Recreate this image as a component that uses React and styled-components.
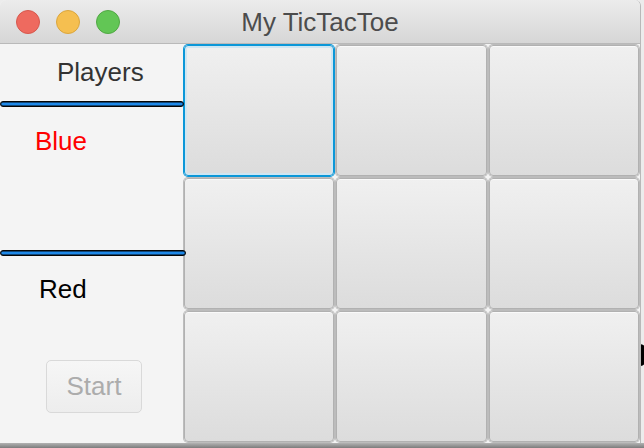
import React from "react";
import styled, { createGlobalStyle } from "styled-components";

const Global = createGlobalStyle`
  html, body { margin: 0; padding: 0; }
  body {
    width: 644px;
    height: 448px;
    overflow: hidden;
    font-family: "Liberation Sans", Arial, sans-serif;
  }
`;

const Desktop = styled.div`
  position: relative;
  width: 644px;
  height: 448px;
  overflow: hidden;
  background: #ececec;
  display: flex;
  flex-direction: column;
`;

const BehindShape = styled.span`
  position: absolute;
  left: 634px;
  top: 344px;
  width: 12px;
  height: 22px;
  border-radius: 6px;
  background: #000;
`;

const Window = styled.div`
  position: relative;
  z-index: 1;
  width: 640px;
  height: 443px;
  border-right: 1px solid #b8b8b8;
  border-top-right-radius: 6px;
  border-top-left-radius: 6px;
  background: #f4f4f4;
  display: flex;
  flex-direction: column;
  overflow: hidden;
`;

const BottomShade = styled.div`
  height: 5px;
  background: linear-gradient(#b2b2b2, #7c7c7c);
`;

const TitleBar = styled.div`
  position: relative;
  height: 43px;
  flex: none;
  border-bottom: 1px solid #b9b9b9;
  background: linear-gradient(#ececec, #d6d6d6);
  display: flex;
  align-items: center;
  justify-content: center;
`;

const Lights = styled.div`
  position: absolute;
  left: 16px;
  top: 10px;
  display: flex;
  gap: 16px;
`;

const Light = styled.span`
  width: 24px;
  height: 24px;
  box-sizing: border-box;
  border-radius: 50%;
  background: ${(p) => p.$c};
  border: 1px solid ${(p) => p.$b};
`;

const Title = styled.div`
  font-size: 26px;
  color: #4c4c4c;
  margin-top: 1px;
`;

const Body = styled.div`
  flex: 1;
  display: flex;
`;

const Side = styled.div`
  width: 183px;
  flex: none;
  display: flex;
  flex-direction: column;
  position: relative;
  z-index: 2;
`;

const Label = styled.div`
  height: 30px;
  line-height: 30px;
  font-size: 26px;
  color: ${(p) => p.$color};
  padding-left: ${(p) => p.$left}px;
  margin-top: ${(p) => p.$top}px;
`;

const Divider = styled.div`
  box-sizing: border-box;
  width: ${(p) => p.$w}px;
  height: 6px;
  margin-top: ${(p) => p.$top}px;
  border: 1px solid #050505;
  border-radius: 3px;
  background: #1e88e8;
  box-shadow: inset 0 0.6px 0 #050505, inset 0 -0.6px 0 #050505;
`;

const StartButton = styled.button`
  margin-top: 56px;
  margin-left: 46px;
  width: 96px;
  height: 53px;
  border: 1px solid #d9d9d9;
  border-radius: 5px;
  background: linear-gradient(#f6f6f6, #ededed);
  color: #acacac;
  font-family: "Liberation Sans", Arial, sans-serif;
  font-size: 26px;
  padding: 0;
`;

const Board = styled.div`
  flex: 1;
  display: grid;
  grid-template-columns: repeat(3, 1fr);
  grid-template-rows: repeat(3, 1fr);
  gap: 2px;
  padding: 1px;
`;

const Cell = styled.button`
  border: 1px solid ${(p) => (p.$focus ? "#0b97d8" : "#b1b1b1")};
  border-radius: 4px;
  background: linear-gradient(#f0f0f0, #dcdcdc);
  box-shadow: ${(p) =>
    p.$focus
      ? "0 0 0 1px #0b97d8, inset 0 0 0 2px #cfe6f2"
      : "0 0 0 1px #bcbcbc, inset 0 1px 0 #fafafa"};
  padding: 0;
`;

export default function App() {
  const cells = Array.from({ length: 9 }, (_, i) => i);
  return (
    <>
      <Global />
      <Desktop>
        <BehindShape />
        <Window>
          <TitleBar>
            <Lights>
              <Light $c="#ee6a5f" $b="#d7584d" />
              <Light $c="#f5bf50" $b="#dba63d" />
              <Light $c="#62c655" $b="#51a844" />
            </Lights>
            <Title>My TicTacToe</Title>
          </TitleBar>
          <Body>
            <Side>
              <Label $color="#333333" $left={57} $top={13}>Players</Label>
              <Divider $w={184} $top={14} />
              <Label $color="#ff0000" $left={35} $top={19}>Blue</Label>
              <Divider $w={186} $top={94} />
              <Label $color="#000000" $left={39} $top={18}>Red</Label>
              <StartButton disabled>Start</StartButton>
            </Side>
            <Board>
              {cells.map((i) => (
                <Cell key={i} $focus={i === 0} />
              ))}
            </Board>
          </Body>
        </Window>
        <BottomShade />
      </Desktop>
    </>
  );
}
